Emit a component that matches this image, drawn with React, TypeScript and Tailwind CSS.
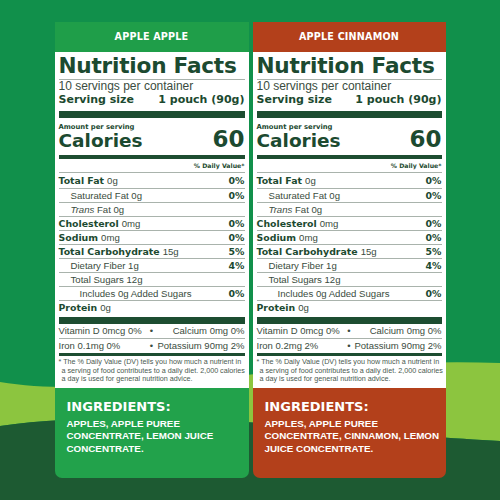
import type { ReactNode } from 'react';

type Row = {
  label: ReactNode;
  amount?: string;
  dv?: string;
  bold?: boolean;
  indent?: 0 | 1 | 2;
};

const rows: Row[] = [
  { label: 'Total Fat', amount: '0g', dv: '0%', bold: true },
  { label: 'Saturated Fat 0g', dv: '0%', indent: 1 },
  { label: <><i>Trans</i> Fat 0g</>, indent: 1 },
  { label: 'Cholesterol', amount: '0mg', dv: '0%', bold: true },
  { label: 'Sodium', amount: '0mg', dv: '0%', bold: true },
  { label: 'Total Carbohydrate', amount: '15g', dv: '5%', bold: true },
  { label: 'Dietary Fiber 1g', dv: '4%', indent: 1 },
  { label: 'Total Sugars 12g', indent: 1 },
  { label: 'Includes 0g Added Sugars', dv: '0%', indent: 2 },
  { label: 'Protein', amount: '0g', bold: true },
];

const heavy = "font-['DejaVu_Sans',sans-serif] font-bold";
const plain = "font-['Liberation_Sans',Arial,sans-serif]";

function NutrientRow({ row, first }: { row: Row; first: boolean }) {
  const pad = row.indent === 2 ? 'pl-[21px]' : row.indent === 1 ? 'pl-[12px]' : 'pl-0';
  return (
    <div
      className={`flex h-[14px] items-center justify-between text-[9.5px] leading-[12px] ${first ? '' : 'border-t border-[#a9b3ac]'} ${pad}`}
    >
      <div className="flex items-baseline gap-[3px] whitespace-nowrap">
        {row.bold ? (
          <>
            <span className={`${heavy} text-[9.4px] text-[#1c4a30]`}>{row.label}</span>
            <span className={`${plain} text-[9.6px] text-[#3a4c40]`}>{row.amount}</span>
          </>
        ) : (
          <span className={`${plain} text-[9.6px] text-[#3a4c40]`}>{row.label}</span>
        )}
      </div>
      {row.dv && <span className={`${heavy} text-[9.4px] text-[#1c4a30]`}>{row.dv}</span>}
    </div>
  );
}

function Panel({
  name,
  width,
  headBg,
  footBg,
  iron,
  ingredients,
}: {
  name: string;
  width: string;
  headBg: string;
  footBg: string;
  iron: string;
  ingredients: string[];
}) {
  return (
    <div className={`${width} flex flex-col`}>
      <div className={`${headBg} flex h-[30px] items-center justify-center`}>
        <span className={`${heavy} text-[9.6px] tracking-[0.02em] text-white`}>{name}</span>
      </div>

      <div className="bg-white px-[4px] pb-[4px] text-[#1c4a30]">
        <div className={`${heavy} border-b border-[#a9b3ac] text-[21.6px] leading-[27px] tracking-[-0.01em] whitespace-nowrap`}>
          Nutrition Facts
        </div>
        <div className={`${plain} text-[12px] leading-[13px] text-[#3a4c40]`}>10 servings per container</div>
        <div className={`${heavy} flex justify-between text-[11px] leading-[14px]`}>
          <span>Serving size</span>
          <span>1 pouch (90g)</span>
        </div>
        <div className="mt-[4px] h-[7px] bg-[#1d4d31]" />
        <div className={`${heavy} pt-[5px] text-[6.8px] leading-[8px]`}>Amount per serving</div>
        <div className={`${heavy} flex items-baseline justify-between`}>
          <span className="text-[18.5px] leading-[17px]">Calories</span>
          <span className="text-[23px] leading-[17px]">60</span>
        </div>
        <div className="mt-[6px] h-[4px] bg-[#1d4d31]" />
        <div className={`${heavy} border-b border-[#a9b3ac] text-right text-[6.2px] leading-[13px]`}>
          % Daily Value*
        </div>
        <div className="pt-[1px]">
          {rows.map((r, i) => (
            <NutrientRow key={i} row={r} first={i === 0} />
          ))}
        </div>
        <div className="mt-[3px] h-[7px] bg-[#1d4d31]" />
        <div className={`${plain} text-[9.5px] leading-[12px] text-[#3a4c40]`}>
          <div className="grid h-[15px] grid-cols-[1fr_auto_1fr] items-center border-b border-[#a9b3ac]">
            <span className="whitespace-nowrap">Vitamin D 0mcg 0%</span>
            <span className="px-[1px]">•</span>
            <span className="text-right whitespace-nowrap">Calcium 0mg 0%</span>
          </div>
          <div className="grid h-[14px] grid-cols-[1fr_auto_1fr] items-center">
            <span className="whitespace-nowrap">{iron}</span>
            <span className="px-[1px]">•</span>
            <span className="text-right whitespace-nowrap">Potassium 90mg 2%</span>
          </div>
        </div>
        <div className="h-[3px] bg-[#1d4d31]" />
        <div className={`${plain} pt-[2px] text-[7.2px] leading-[8.5px] text-[#4a5a50] whitespace-nowrap`}>
          <div>* The % Daily Value (DV) tells you how much a nutrient in</div>
          <div className="pl-[3px]">a serving of food contributes to a daily diet. 2,000 calories</div>
          <div className="pl-[3px]">a day is used for general nutrition advice.</div>
        </div>
      </div>

      <div className={`${footBg} h-[90px] rounded-b-[7px] px-[12px] pt-[11px] text-white`}>
        <div className={`${heavy} text-[13px] leading-[16px]`}>INGREDIENTS:</div>
        <div className="mt-[3px] font-['Liberation_Sans',Arial,sans-serif] text-[9.8px] font-bold leading-[12.5px]">
          {ingredients.map((l, i) => (
            <div key={i} className="whitespace-nowrap">{l}</div>
          ))}
        </div>
      </div>
    </div>
  );
}

export default function App() {
  return (
    <div className="relative h-[500px] w-[500px] overflow-hidden bg-[#11904b]">
      <svg className="absolute inset-0" width="500" height="500" viewBox="0 0 500 500">
        <path d="M0,382 C120,402 300,356 500,363 L500,441 C380,436 160,404 0,426 Z" fill="#8cc53f" />
        <path d="M0,426 C160,404 380,436 500,441 L500,500 L0,500 Z" fill="#1d5a32" />
      </svg>
      <div className="relative flex justify-center gap-[4px] pt-[22px]">
        <Panel
          name="APPLE APPLE"
          width="w-[194px]"
          headBg="bg-[#1f9e49]"
          footBg="bg-[#22a24b]"
          iron="Iron 0.1mg 0%"
          ingredients={['APPLES, APPLE PUREE', 'CONCENTRATE, LEMON JUICE', 'CONCENTRATE.']}
        />
        <Panel
          name="APPLE CINNAMON"
          width="w-[193px]"
          headBg="bg-[#b3401b]"
          footBg="bg-[#b3401b]"
          iron="Iron 0.2mg 2%"
          ingredients={['APPLES, APPLE PUREE', 'CONCENTRATE, CINNAMON, LEMON', 'JUICE CONCENTRATE.']}
        />
      </div>
    </div>
  );
}
